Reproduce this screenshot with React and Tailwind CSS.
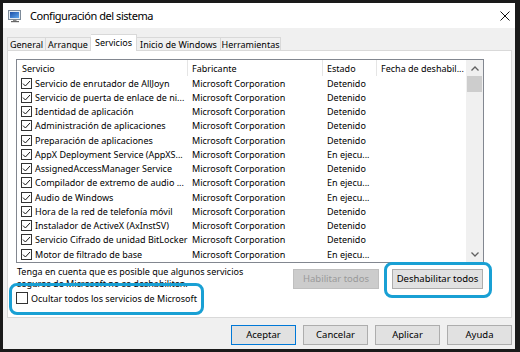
import React from "react";

const rows = [
  ["Servicio de enrutador de AllJoyn", "Detenido"],
  ["Servicio de puerta de enlace de ni...", "Detenido"],
  ["Identidad de aplicación", "Detenido"],
  ["Administración de aplicaciones", "Detenido"],
  ["Preparación de aplicaciones", "Detenido"],
  ["AppX Deployment Service (AppXS...", "En ejecu..."],
  ["AssignedAccessManager Service", "Detenido"],
  ["Compilador de extremo de audio ...", "En ejecu..."],
  ["Audio de Windows", "En ejecu..."],
  ["Hora de la red de telefonía móvil", "Detenido"],
  ["Instalador de ActiveX (AxInstSV)", "Detenido"],
  ["Servicio Cifrado de unidad BitLocker", "Detenido"],
  ["Motor de filtrado de base", "En ejecu..."],
  ["", ""],
];

function Check({ checked = true }) {
  return (
    <div className="w-[11px] h-[11px] border border-[#333333] bg-white flex items-center justify-center shrink-0">
      {checked && (
        <svg width="9" height="9" viewBox="0 0 9 9">
          <path d="M1 4.6 L3.4 7 L8 2" fill="none" stroke="#1a1a1a" strokeWidth="1" />
        </svg>
      )}
    </div>
  );
}

function Btn({ children, className = "" }) {
  return (
    <div
      className={`h-[20px] flex items-center justify-center border text-[9.5px] ${className}`}
    >
      {children}
    </div>
  );
}

export default function App() {
  return (
    <div className="relative w-[520px] h-[352px] bg-[#1a1a1a] pl-[3px] pt-[3px] pr-[5px] pb-[3px] font-['Noto_Sans',sans-serif] text-black text-[9px] leading-none overflow-hidden">
      <div className="w-full h-full flex flex-col bg-[#f0f0f0]">
        {/* title bar */}
        <div className="h-[25px] bg-white flex items-center shrink-0">
          <div className="ml-[5px] mr-[8px] w-[14px] h-[14px]">
            <svg width="14" height="14" viewBox="0 0 14 14">
              <defs>
                <linearGradient id="scr" x1="0" y1="0" x2="1" y2="1">
                  <stop offset="0" stopColor="#1a4fa8" />
                  <stop offset="1" stopColor="#5ea6ec" />
                </linearGradient>
              </defs>
              <rect x="0.5" y="1.5" width="12" height="9" fill="#e4ecf4" stroke="#7d8b99" />
              <rect x="2" y="3" width="9" height="6" fill="url(#scr)" />
              <rect x="5" y="10.5" width="3.5" height="1.5" fill="#8a8a8a" />
              <rect x="3" y="12" width="8" height="1.2" fill="#666" />
            </svg>
          </div>
          <span className="text-[11px] tracking-[-0.45px]">Configuración del sistema</span>
          <div className="ml-auto mr-[5px] w-[10px] h-[10px]">
            <svg width="10" height="10" viewBox="0 0 10 10">
              <path d="M0.5 0.5 L9.5 9.5 M9.5 0.5 L0.5 9.5" stroke="#111" strokeWidth="1" />
            </svg>
          </div>
        </div>

        {/* body */}
        <div className="flex-1 flex flex-col pt-[6px] pl-[4px] pr-[3px]">
          {/* tabs */}
          <div className="flex h-[16px] items-end shrink-0 relative z-10">
            <div className="w-[39px] h-[13px] border border-b-0 border-[#d9d9d9] bg-[#f0f0f0] flex items-center justify-center">General</div>
            <div className="w-[45px] h-[13px] border border-b-0 border-l-0 border-[#d9d9d9] bg-[#f0f0f0] flex items-center justify-center">Arranque</div>
            <div className="w-[46px] h-[17px] -mb-[1px] border border-b-0 border-l-0 border-[#d9d9d9] bg-white flex items-center justify-center pb-[1px]">Servicios</div>
            <div className="w-[84px] h-[13px] border border-b-0 border-l-0 border-[#d9d9d9] bg-[#f0f0f0] flex items-center justify-center">Inicio de Windows</div>
            <div className="w-[60px] h-[13px] border border-b-0 border-l-0 border-[#d9d9d9] bg-[#f0f0f0] flex items-center justify-center">Herramientas</div>
          </div>

          {/* panel */}
          <div className="h-[268px] bg-white border border-[#d9d9d9] flex flex-col shrink-0">
            {/* list view */}
            <div className="ml-[8px] mt-[8px] w-[468px] h-[204px] border border-[#828790] flex shrink-0">
              <div className="w-[449px] flex flex-col overflow-hidden">
                <div className="h-[16px] flex shrink-0">
                  <div className="w-[171px] pl-[5px] flex items-center border-r border-[#e5e5e5]">Servicio</div>
                  <div className="w-[135px] pl-[4px] flex items-center border-r border-[#e5e5e5]">Fabricante</div>
                  <div className="w-[54px] pl-[4px] flex items-center border-r border-[#e5e5e5]">Estado</div>
                  <div className="w-[89px] pl-[4px] flex items-center">Fecha de deshabil...</div>
                </div>
                {rows.map(([name, state], i) => (
                  <div key={i} className="h-[14.25px] flex items-center shrink-0">
                    <div className="w-[171px] pl-[4px] flex items-center gap-[3px]">
                      <Check />
                      <span className="whitespace-nowrap">{name}</span>
                    </div>
                    <div className="w-[135px] pl-[4px] whitespace-nowrap">{name ? "Microsoft Corporation" : ""}</div>
                    <div className="w-[54px] pl-[4px] whitespace-nowrap">{state}</div>
                    <div className="w-[89px]" />
                  </div>
                ))}
              </div>
              <div className="w-[17px] bg-[#f0f0f0] flex flex-col">
                <div className="h-[16px] flex items-center justify-center">
                  <svg width="8" height="5" viewBox="0 0 8 5">
                    <path d="M0.5 4.5 L4 1 L7.5 4.5" fill="none" stroke="#606060" strokeWidth="1.3" />
                  </svg>
                </div>
                <div className="h-[16px] mx-[1px] bg-[#cdcdcd]" />
                <div className="flex-1" />
                <div className="h-[16px] flex items-center justify-center">
                  <svg width="8" height="5" viewBox="0 0 8 5">
                    <path d="M0.5 0.5 L4 4 L7.5 0.5" fill="none" stroke="#606060" strokeWidth="1.3" />
                  </svg>
                </div>
              </div>
            </div>

            {/* bottom area */}
            <div className="flex justify-between">
              <div className="ml-[8px] mt-[3px] flex flex-col">
                <div className="pl-[1px] leading-[12px] whitespace-nowrap">Tenga en cuenta que es posible que algunos servicios</div>
                <div className="pl-[1px] leading-[12px] whitespace-nowrap">seguros de Microsoft no se deshabiliten.</div>
                <div className="mt-[2px] h-[12px] flex items-center gap-[3px]">
                  <div className="w-[12px] h-[12px] border border-[#333333] bg-white" />
                  <span className="text-[9px]">Ocultar todos los servicios de Microsoft</span>
                </div>
              </div>
              <div className="mr-[28px] mt-[6px] flex gap-[13px]">
                <Btn className="w-[86px] bg-[#cccccc] border-[#bfbfbf] text-[#9a9a9a]">Habilitar todos</Btn>
                <Btn className="w-[91px] bg-[#e1e1e1] border-[#adadad]">Deshabilitar todos</Btn>
              </div>
            </div>
          </div>

          {/* dialog buttons */}
          <div className="flex justify-end gap-[7px] mt-[7px]">
            <Btn className="w-[65px] bg-[#e1e1e1] border-[#0078d7]">Aceptar</Btn>
            <Btn className="w-[65px] bg-[#e1e1e1] border-[#adadad]">Cancelar</Btn>
            <Btn className="w-[65px] bg-[#e1e1e1] border-[#adadad]">Aplicar</Btn>
            <Btn className="w-[65px] bg-[#e1e1e1] border-[#adadad]">Ayuda</Btn>
          </div>
        </div>
      </div>

      {/* highlight annotations */}
      <div className="absolute left-[9px] top-[283px] w-[195px] h-[32px] border-[3px] border-[#19a0d4] rounded-[8px]" />
      <div className="absolute left-[384px] top-[262px] w-[108px] h-[36px] border-[3px] border-[#19a0d4] rounded-[8px]" />
    </div>
  );
}
